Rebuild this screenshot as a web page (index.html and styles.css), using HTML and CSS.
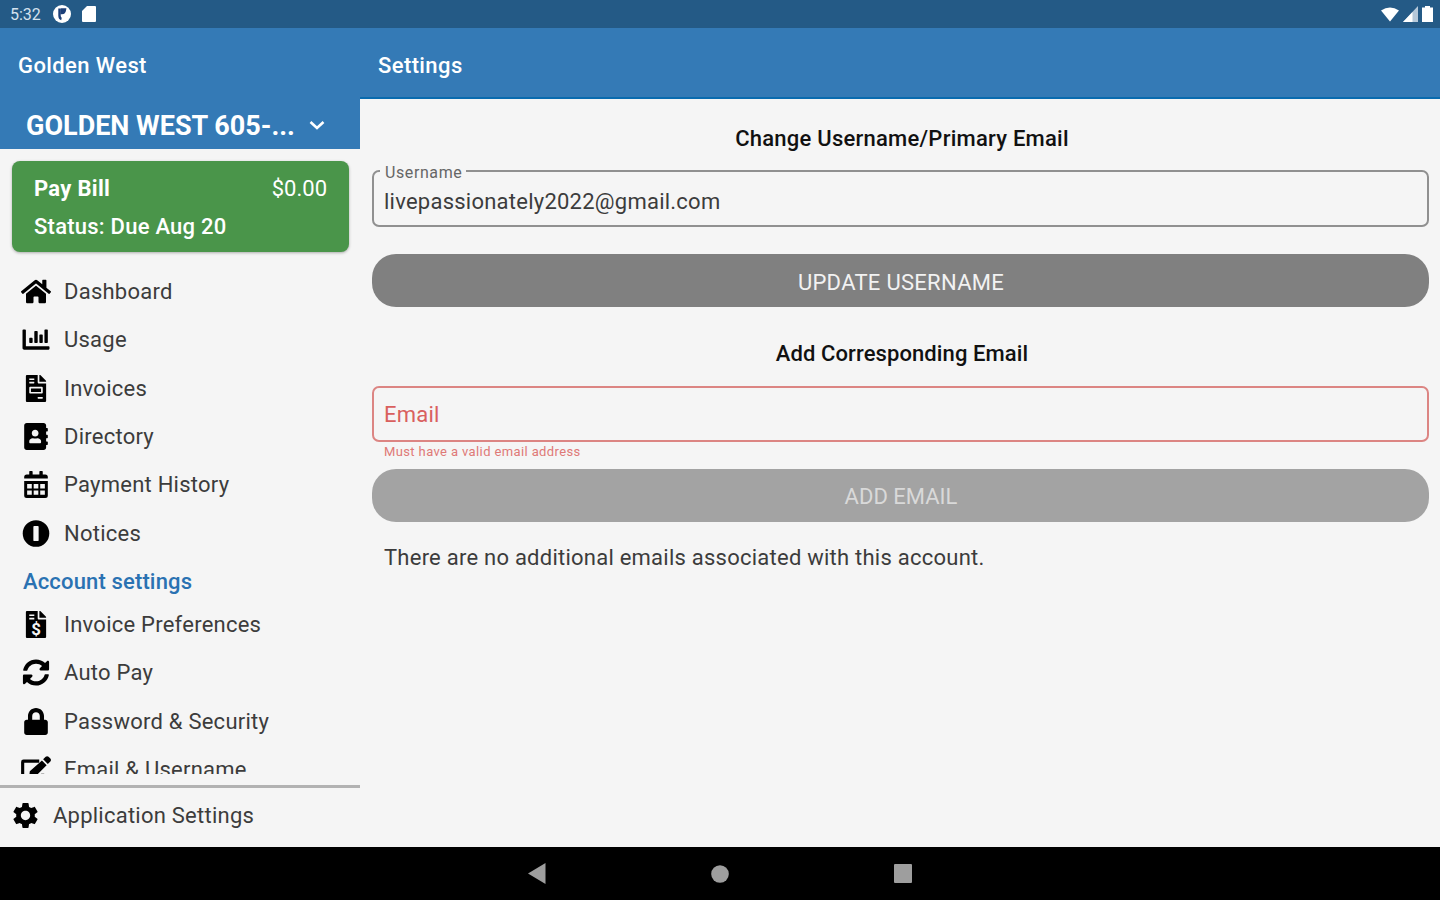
FILE: index.html
```html
<!DOCTYPE html>
<html lang="en">
<head>
    <meta charset="UTF-8">
    <meta name="viewport" content="width=device-width, initial-scale=1.0">
    <title>Golden West - Settings</title>
    <link rel="stylesheet" href="styles.css">
</head>
<body>
    <div class="screen">
        <!-- Android status bar -->
        <div class="status-bar">
            <span class="clock">5:32</span>
            <svg class="status-app" viewBox="0 0 20 20"><circle cx="10" cy="10" r="9" fill="#fff"/><path d="M7.500 4.500v7q0 3 2 3.500M10 5.500v3.500q2.500 0 3-3.500z" fill="none" stroke="#1c3f78" stroke-width="2.400"/></svg>
            <svg class="status-sd" viewBox="0 0 14 16"><path d="M5 0h8a1 1 0 0 1 1 1v14a1 1 0 0 1-1 1H1a1 1 0 0 1-1-1V5z" fill="#fff"/></svg>
            <div class="status-right">
                <svg width="18" height="15" viewBox="0 0 18 15"><path d="M0 3.500Q9-2.500 18 3.500L9 14.500z" fill="#fff"/></svg>
                <svg width="15" height="16" viewBox="0 0 15 16"><path d="M0 16L15 0v16z" fill="#b5c8d9"/><path d="M0 16L9.500 6v10z" fill="#fff"/></svg>
                <svg width="11" height="16" viewBox="0 0 11 16"><path d="M3 0h5v1.500h3V16H0V1.500h3z" fill="#fff"/></svg>
            </div>
        </div>

        <div class="app">
            <!-- Side menu -->
            <div class="sidebar">
                <div class="sidebar-header">
                    <div class="brand">Golden West</div>
                    <div class="account">
                        <span class="account-name">GOLDEN WEST 605-...</span>
                        <svg width="16" height="10" viewBox="0 0 16 10"><path d="M1.500 1l6.500 6 6.500-6" fill="none" stroke="#fff" stroke-width="2.600"/></svg>
                    </div>
                </div>

                <div class="bill">
                    <div class="bill-row"><span class="bill-title">Pay Bill</span><span class="bill-amount">$0.00</span></div>
                    <div class="bill-status">Status: Due Aug 20</div>
                </div>

                <div class="menu">
                    <div class="item">
                        <svg class="icon" viewBox="0 0 576 512"><path d="M280.370 148.260L96 300.110V464a16 16 0 0 0 16 16l112.060-.290a16 16 0 0 0 15.920-16V368a16 16 0 0 1 16-16h64a16 16 0 0 1 16 16v95.640a16 16 0 0 0 16 16.050L464 480a16 16 0 0 0 16-16V300L295.670 148.260a12.190 12.190 0 0 0-15.300 0zM571.600 251.470L488 182.560V44.050a12 12 0 0 0-12-12h-56a12 12 0 0 0-12 12v72.610L318.470 43a48 48 0 0 0-61 0L4.340 251.470a12 12 0 0 0-1.600 16.900l25.500 31A12 12 0 0 0 45.150 301l235.220-193.740a12.190 12.190 0 0 1 15.300 0L530.900 301a12 12 0 0 0 16.900-1.600l25.500-31a12 12 0 0 0-1.700-16.930z"/></svg>
                        <span>Dashboard</span>
                    </div>
                    <div class="item">
                        <svg class="icon" viewBox="0 0 512 512"><path d="M332.800 320h38.400c6.400 0 12.800-6.400 12.800-12.800V172.800c0-6.400-6.400-12.800-12.800-12.800h-38.400c-6.400 0-12.800 6.400-12.800 12.800v134.400c0 6.400 6.400 12.800 12.800 12.800zm96 0h38.400c6.400 0 12.800-6.400 12.800-12.800V76.800c0-6.400-6.400-12.800-12.800-12.800h-38.400c-6.400 0-12.800 6.400-12.800 12.800v230.400c0 6.400 6.400 12.800 12.800 12.800zm-288 0h38.400c6.400 0 12.800-6.400 12.800-12.800v-70.400c0-6.400-6.400-12.800-12.800-12.800h-38.400c-6.400 0-12.800 6.400-12.800 12.800v70.400c0 6.400 6.400 12.800 12.800 12.800zm96 0h38.400c6.400 0 12.800-6.400 12.800-12.800V108.800c0-6.400-6.400-12.800-12.800-12.800h-38.400c-6.400 0-12.800 6.400-12.800 12.800v198.400c0 6.400 6.400 12.800 12.800 12.800zM496 384H64V80c0-8.840-7.160-16-16-16H16C7.160 64 0 71.160 0 80v336c0 17.670 14.330 32 32 32h464c8.840 0 16-7.160 16-16v-32c0-8.840-7.160-16-16-16z"/></svg>
                        <span>Usage</span>
                    </div>
                    <div class="item">
                        <svg class="icon" viewBox="0 0 384 512"><path d="M288 256H96v64h192v-64zm89-151L279.100 7c-4.500-4.500-10.600-7-17-7H256v128h128v-6.100c0-6.300-2.500-12.400-7-16.900zm-153 31V0H24C10.700 0 0 10.700 0 24v464c0 13.300 10.700 24 24 24h336c13.300 0 24-10.700 24-24V160H248c-13.200 0-24-10.800-24-24zM64 72c0-4.420 3.580-8 8-8h80c4.420 0 8 3.580 8 8v16c0 4.420-3.580 8-8 8H72c-4.420 0-8-3.580-8-8V72zm0 64c0-4.420 3.580-8 8-8h80c4.420 0 8 3.580 8 8v16c0 4.420-3.580 8-8 8H72c-4.420 0-8-3.580-8-8v-16zm256 304c0 4.420-3.580 8-8 8h-80c-4.420 0-8-3.580-8-8v-16c0-4.420 3.580-8 8-8h80c4.420 0 8 3.580 8 8v16zm0-200v96c0 8.840-7.160 16-16 16H80c-8.840 0-16-7.160-16-16v-96c0-8.840 7.160-16 16-16h224c8.840 0 16 7.160 16 16z"/></svg>
                        <span>Invoices</span>
                    </div>
                    <div class="item">
                        <svg class="icon" viewBox="0 0 448 512"><path d="M436 160c6.600 0 12-5.400 12-12v-40c0-6.600-5.400-12-12-12h-20V48c0-26.500-21.500-48-48-48H48C21.500 0 0 21.500 0 48v416c0 26.500 21.500 48 48 48h320c26.500 0 48-21.500 48-48v-48h20c6.600 0 12-5.400 12-12v-40c0-6.600-5.400-12-12-12h-20v-64h20c6.600 0 12-5.400 12-12v-40c0-6.600-5.400-12-12-12h-20v-64h20zm-228-32c35.300 0 64 28.700 64 64s-28.700 64-64 64-64-28.700-64-64 28.700-64 64-64zm112 236.800c0 10.600-10 19.200-22.400 19.200H118.400C106 384 96 375.400 96 364.800v-19.200c0-31.800 30.100-57.600 67.200-57.600h5c12.300 5.100 25.700 8 39.800 8s27.600-2.900 39.800-8h5c37.100 0 67.200 25.800 67.200 57.600v19.200z"/></svg>
                        <span>Directory</span>
                    </div>
                    <div class="item">
                        <svg class="icon" viewBox="0 0 448 512"><path d="M48 64h48V12a12 12 0 0 1 12-12h40a12 12 0 0 1 12 12v52h128V12a12 12 0 0 1 12-12h40a12 12 0 0 1 12 12v52h48a48 48 0 0 1 48 48v32H0v-32a48 48 0 0 1 48-48z"/><path fill-rule="evenodd" d="M0 188h448v276a48 48 0 0 1-48 48H48a48 48 0 0 1-48-48zM56 248v82h88v-82zM180 248v82h88v-82zM304 248v82h88v-82zM56 370v82h88v-82zM180 370v82h88v-82zM304 370v82h88v-82z"/></svg>
                        <span>Payment History</span>
                    </div>
                    <div class="item">
                        <svg class="icon" viewBox="0 0 512 512"><circle cx="256" cy="256" r="252"/><rect x="206" y="112" width="100" height="288" rx="18" fill="#f5f5f5"/></svg>
                        <span>Notices</span>
                    </div>
                    <div class="menu-heading">Account settings</div>
                    <div class="item">
                        <svg class="icon" viewBox="0 0 384 512"><path d="M377 105L279.100 7c-4.500-4.500-10.600-7-17-7H256v128h128v-6.100c0-6.300-2.500-12.400-7-16.900zM224 136V0H24C10.700 0 0 10.700 0 24v464c0 13.300 10.700 24 24 24h336c13.300 0 24-10.700 24-24V160H248c-13.200 0-24-10.800-24-24zM64 64h96v32H64zM64 128h96v32H64z" fill-rule="evenodd"/><text class="dollar" x="192" y="446" text-anchor="middle">$</text></svg>
                        <span>Invoice Preferences</span>
                    </div>
                    <div class="item">
                        <svg class="icon" viewBox="0 0 512 512"><path d="M370.720 133.280C339.458 104.008 298.888 87.962 255.848 88c-77.458.068-144.328 53.178-162.791 126.850-1.344 5.363-6.122 9.150-11.651 9.150H24.103c-7.498 0-13.194-6.807-11.807-14.176C33.933 94.924 134.813 8 256 8c66.448 0 126.791 26.136 171.315 68.685L463.030 40.970C478.149 25.851 504 36.559 504 57.941V192c0 13.255-10.745 24-24 24H345.941c-21.382 0-32.090-25.851-16.971-40.971l41.750-41.749zM32 296h134.059c21.382 0 32.090 25.851 16.971 40.971l-41.750 41.750c31.262 29.273 71.835 45.319 114.876 45.280 77.418-.070 144.315-53.144 162.787-126.849 1.344-5.363 6.122-9.150 11.651-9.150h57.304c7.498 0 13.194 6.807 11.807 14.176C478.067 417.076 377.187 504 256 504c-66.448 0-126.791-26.136-171.315-68.685L48.970 471.030C33.851 486.149 8 475.441 8 454.059V320c0-13.255 10.745-24 24-24z"/></svg>
                        <span>Auto Pay</span>
                    </div>
                    <div class="item">
                        <svg class="icon" viewBox="0 0 448 512"><path d="M400 224h-24v-72C376 68.200 307.800 0 224 0S72 68.200 72 152v72H48c-26.500 0-48 21.500-48 48v192c0 26.500 21.500 48 48 48h352c26.500 0 48-21.500 48-48V272c0-26.500-21.500-48-48-48zm-104 0H152v-72c0-39.700 32.300-72 72-72s72 32.300 72 72v72z"/></svg>
                        <span>Password &amp; Security</span>
                    </div>
                    <div class="item">
                        <svg class="icon" viewBox="0 0 576 512"><path d="M350 96H48a16 16 0 0 0-16 16v352a16 16 0 0 0 16 16h352a16 16 0 0 0 16-16V340" fill="none" stroke="#000" stroke-width="60"/><path d="M402 84l90 90-219 219-92 10c-13 1-23-9-22-22l10-92zM425 61l49-49c15-15 40-15 55 0l35 35c15 15 15 40 0 55l-49 49z"/></svg>
                        <span>Email &amp; Username</span>
                    </div>
                </div>

                <div class="sidebar-footer">
                    <svg width="31" height="31" viewBox="0 0 24 24"><path d="M19.140 12.940c.040-.300.060-.610.060-.940 0-.320-.020-.640-.070-.940l2.030-1.580c.180-.140.230-.410.120-.610l-1.920-3.320c-.120-.220-.370-.290-.590-.220l-2.390.960c-.500-.380-1.030-.700-1.620-.940l-.360-2.540c-.040-.240-.240-.410-.480-.410h-3.840c-.240 0-.430.170-.470.410l-.360 2.540c-.590.240-1.130.570-1.620.940l-2.390-.960c-.220-.080-.470 0-.590.220L2.740 8.870c-.120.210-.080.470.120.610l2.030 1.580c-.050.300-.090.630-.090.940s.020.640.070.940l-2.030 1.580c-.180.140-.230.410-.120.610l1.920 3.320c.120.220.370.290.590.220l2.390-.960c.500.380 1.030.700 1.620.940l.360 2.540c.050.240.240.410.480.410h3.840c.240 0 .440-.170.470-.410l.360-2.540c.590-.240 1.130-.560 1.620-.940l2.390.960c.220.080.470 0 .590-.220l1.920-3.320c.120-.220.070-.470-.120-.610l-2.010-1.580zM12 15.600c-1.980 0-3.600-1.620-3.600-3.600s1.620-3.600 3.600-3.600 3.600 1.620 3.600 3.600-1.620 3.600-3.600 3.600z"/></svg>
                    <span>Application Settings</span>
                </div>
            </div>

            <!-- Settings page -->
            <div class="main">
                <div class="main-header">Settings</div>
                <div class="content">
                    <h2 class="section-title">Change Username/Primary Email</h2>
                    <fieldset class="field">
                        <legend>Username</legend>
                        <div class="field-value">livepassionately2022@gmail.com</div>
                    </fieldset>
                    <button class="button">UPDATE USERNAME</button>

                    <h2 class="section-title second">Add Corresponding Email</h2>
                    <div class="field-error">Email</div>
                    <div class="error-text">Must have a valid email address</div>
                    <button class="button disabled">ADD EMAIL</button>
                    <p class="note">There are no additional emails associated with this account.</p>
                </div>
            </div>
        </div>

        <!-- Android navigation bar -->
        <div class="nav-bar">
            <svg width="18" height="21" viewBox="0 0 18 21"><path d="M0 10.500L17.500 0v21z" fill="#9e9e9e"/></svg>
            <svg width="18" height="18" viewBox="0 0 18 18"><circle cx="9" cy="9" r="8.800" fill="#9e9e9e"/></svg>
            <svg width="18" height="19" viewBox="0 0 18 19"><rect width="18" height="19" rx="1" fill="#9e9e9e"/></svg>
        </div>
    </div>
</body>
</html>
```
FILE: styles.css
```css
body {
    margin: 0;
    font-family: Roboto, "Liberation Sans", sans-serif;
    font-size: 22px;
    letter-spacing: 0.24px;
    background: #f5f5f5;
    color: #3c3c3c;
}

.screen {
    display: flex;
    flex-direction: column;
    width: 1440px;
    height: 900px;
    overflow: hidden;
}

svg {
    flex-shrink: 0;
}

/* Status bar */
.status-bar {
    display: flex;
    align-items: center;
    height: 28px;
    box-sizing: border-box;
    padding: 0 7px 0 10px;
    background: #245a86;
    color: #d5e2ee;
}

.clock {
    width: 42px;
    font-size: 16px;
    letter-spacing: 0;
}

.status-app {
    width: 20px;
    height: 20px;
}

.status-sd {
    width: 14px;
    height: 16px;
    margin-left: 10px;
}

.status-right {
    display: flex;
    align-items: center;
    gap: 4px;
    margin-left: auto;
}

.app {
    display: flex;
    height: 819px;
}

/* Side menu */
.sidebar {
    display: flex;
    flex-direction: column;
    width: 360px;
}

.sidebar-header {
    height: 121px;
    background: #347ab6;
    color: #fff;
}

.brand {
    height: 74px;
    line-height: 75px;
    padding-left: 18px;
    font-weight: 500;
    letter-spacing: 0.4px;
}

.account {
    display: flex;
    align-items: center;
    gap: 14px;
    height: 47px;
    padding-left: 26px;
}

.account-name {
    font-size: 27px;
    font-weight: 700;
    letter-spacing: 0;
}

/* Pay bill card */
.bill {
    height: 91px;
    box-sizing: border-box;
    margin: 12px 11px 0 12px;
    padding: 9px 22px 0;
    border-radius: 8px;
    background: #4a954a;
    box-shadow: 0 1px 3px rgba(0,0,0,0.3);
    color: #fff;
    font-weight: 500;
}

.bill-row {
    display: flex;
    justify-content: space-between;
    line-height: 38px;
}

.bill-title {
    font-weight: 700;
    letter-spacing: 0.3px;
}

.bill-amount {
    font-weight: 400;
    letter-spacing: 0;
}

.bill-status {
    line-height: 38px;
}

.menu {
    height: 522px;
    padding-top: 15.5px;
    box-sizing: border-box;
    overflow: hidden;
}

.item {
    display: flex;
    align-items: center;
    gap: 13px;
    height: 48.3px;
    padding-left: 21px;
}

.icon {
    width: 30px;
    height: 27px;
}

.dollar {
    fill: #f5f5f5;
    font-size: 320px;
    font-weight: 700;
}

.menu-heading {
    height: 43px;
    line-height: 49px;
    padding-left: 23px;
    font-weight: 500;
    letter-spacing: 0.15px;
    color: #2a72b2;
}

.sidebar-footer {
    display: flex;
    align-items: center;
    gap: 12px;
    height: 62px;
    box-sizing: border-box;
    margin-top: auto;
    padding: 0 0 5px 10px;
    border-top: 3px solid #b2b2b2;
}

/* Settings page */
.main {
    flex-grow: 1;
}

.main-header {
    height: 71px;
    box-sizing: border-box;
    line-height: 75px;
    padding-left: 18px;
    background: #347ab6;
    border-bottom: 2px solid #096baf;
    color: #fff;
    font-weight: 500;
    letter-spacing: 0.4px;
}

.content {
    padding: 24px 11px 0 12px;
}

.section-title {
    margin: 0;
    line-height: 32px;
    padding-left: 3px;
    font-size: 22px;
    font-weight: 500;
    text-align: center;
    color: #111;
}

.section-title.second {
    margin-top: 31px;
    letter-spacing: 0.1px;
}

.field {
    height: 64px;
    box-sizing: border-box;
    margin: 8px 0 0;
    padding: 0 10px;
    border: 2px solid #909090;
    border-radius: 7px;
}

.field legend {
    height: 16px;
    margin-left: -4px;
    padding: 0 4px 0 5px;
    font-size: 16px;
    letter-spacing: 0.6px;
    line-height: 20px;
    color: #666;
}

.field-value {
    padding-top: 4px;
    line-height: 38px;
}

.button {
    display: block;
    width: 100%;
    height: 53px;
    margin-top: 27px;
    padding: 3px 0 0 1px;
    border: none;
    border-radius: 24px;
    background: #808080;
    color: #f2f2f2;
    font-family: inherit;
    font-size: 22px;
    letter-spacing: 0.3px;
}

.field-error {
    height: 56px;
    box-sizing: border-box;
    margin-top: 16px;
    padding-left: 10px;
    border: 2px solid #dc8583;
    border-radius: 7px;
    line-height: 54px;
    color: #d9605e;
}

.error-text {
    height: 27px;
    line-height: 19px;
    padding-left: 12px;
    font-size: 13px;
    letter-spacing: 0.38px;
    color: #df7977;
}

.button.disabled {
    margin-top: 0;
    padding-top: 2px;
    background: #a3a3a3;
    color: #d9d9d9;
    letter-spacing: 0;
}

.note {
    margin: 20px 0 0 12px;
    line-height: 32px;
}

/* Navigation bar */
.nav-bar {
    display: flex;
    align-items: center;
    justify-content: center;
    gap: 165px;
    height: 53px;
    background: #000;
}
```
